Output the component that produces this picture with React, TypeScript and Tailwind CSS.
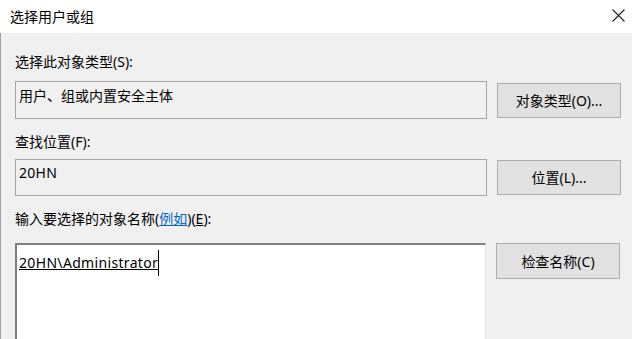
const font = { fontFamily: '"Noto Sans", "Noto Sans CJK SC", sans-serif' };

function Button({ label, className }: { label: string; className: string }) {
  return (
    <button
      className={`w-[124px] border border-[#adadad] bg-[#e1e1e1] text-[14px] text-black flex items-center justify-center ${className}`}
    >
      {label}
    </button>
  );
}

export default function App() {
  return (
    <div
      className="w-[632px] h-[339px] overflow-hidden bg-[#f0f0f0] flex flex-col text-black"
      style={font}
    >
      <div className="h-[33px] shrink-0 bg-white flex items-center justify-between pl-[10px] pr-[7px]">
        <span className="text-[14px] leading-5">选择用户或组</span>
        <svg width="13" height="13" viewBox="0 0 13 13" className="mt-[-2px]">
          <path d="M0.5 0.5 L12.5 12.5 M12.5 0.5 L0.5 12.5" stroke="#222" strokeWidth="1.1" />
        </svg>
      </div>

      <div className="flex-1 border-l border-[#a0a0a0] pl-[14px] pt-[19px] flex flex-col">
        <div className="text-[14px] leading-5 h-5">选择此对象类型(S):</div>
        <div className="mt-[9px] flex items-start gap-[10px]">
          <div className="w-[472px] h-[38px] border border-[#a5a5a5] bg-[#f0f0f0] pl-[3px] pt-[4px] text-[14px] leading-5">
            用户、组或内置安全主体
          </div>
          <Button label="对象类型(O)..." className="h-[35px] mt-[2px]" />
        </div>

        <div className="mt-[13px] text-[14px] leading-5 h-5">查找位置(F):</div>
        <div className="mt-[7px] flex items-start gap-[10px]">
          <div className="w-[472px] h-[37px] border border-[#a5a5a5] bg-[#f0f0f0] pl-[3px] pt-[3px] text-[14px] leading-5 tracking-[0.3px]">
            20HN
          </div>
          <Button label="位置(L)..." className="h-[35px] mt-[1px]" />
        </div>

        <div className="mt-[13px] text-[14px] leading-5 h-5">
          输入要选择的对象名称(
          <span className="text-[#0066cc] underline">例如</span>
          )(<span className="underline">E</span>):
        </div>
        <div className="mt-[14px] flex items-start gap-[10px]">
          <div className="w-[471px] h-[120px] border-t-2 border-l-2 border-r border-t-[#808080] border-l-[#808080] border-r-[#e3e3e3] bg-white pl-[2px] pt-[5px] text-[14px] leading-5">
            <span className="underline tracking-[0.33px]">20HN\Administrator</span>
            <span className="inline-block w-px h-[26px] bg-black align-[-8px]" />
          </div>
          <Button label="检查名称(C)" className="h-[36px]" />
        </div>
      </div>
    </div>
  );
}
